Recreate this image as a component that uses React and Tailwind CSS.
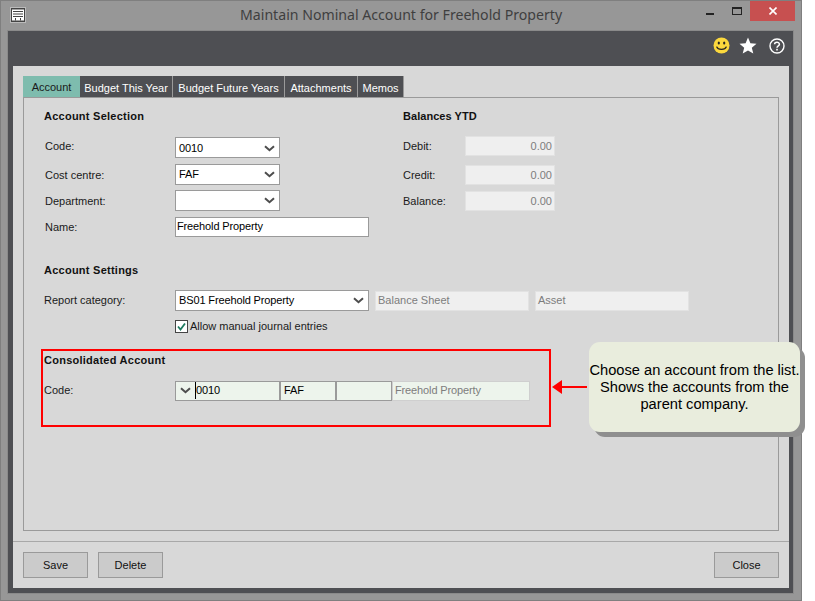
const Chevron = () => (
  <svg width="11" height="7" viewBox="0 0 11 7" className="shrink-0">
    <path d="M1 1.2 L5.5 5.2 L10 1.2" fill="none" stroke="#4d4d4d" strokeWidth="2" />
  </svg>
);

const Select = ({ value, className }) => (
  <div className={"h-[21px] bg-white border border-[#9a9a9a] flex items-center justify-between pl-[3px] pr-[4px] text-[11px] tracking-[-0.13px] text-black " + className}>
    <span>{value}</span>
    <Chevron />
  </div>
);

const Label = ({ children, className = "w-[130px]" }) => (
  <div className={"text-[11px] text-[#1a1a1a] shrink-0 " + className}>{children}</div>
);

const Heading = ({ children, className = "tracking-[0.25px]" }) => (
  <div className={"text-[11px] leading-[14px] font-bold text-[#111] " + className}>{children}</div>
);

const ReadOnly = ({ children, className }) => (
  <div className={"h-[20px] bg-[#efefef] border border-[#e2e2e2] text-[11px] text-[#7d7d7d] flex items-center px-[2px] " + className}>
    {children}
  </div>
);

const Tab = ({ children, active, className }) => (
  <div
    className={
      "h-[21px] flex items-center justify-center text-[11px] " +
      (active ? "bg-[#7ebcae] text-[#1a1a1a] pt-[1px]" : "bg-[#4e4f53] text-white border-r border-[#9a9a9a] pt-[3px]") +
      " " + className
    }
  >
    {children}
  </div>
);

const Btn = ({ children }) => (
  <button className="w-[65px] h-[26px] bg-[#cbcbcb] border border-[#9a9a9a] text-[11px] text-[#111]">{children}</button>
);

export default function App() {
  return (
    <div className="w-[815px] h-[601px] bg-white relative overflow-hidden" style={{ fontFamily: '"Liberation Sans", Arial, sans-serif' }}>
      <div className="w-[802px] h-[601px] bg-[#979797] border border-[#7f7f7f] flex flex-col">
        {/* title bar */}
        <div className="h-[29px] shrink-0 flex items-start relative">
          <svg width="16" height="16" viewBox="0 0 16 16" className="ml-[9px] mt-[6px] shrink-0">
            <rect x="0.5" y="0.5" width="15" height="15" fill="#444" stroke="#bbb" />
            <rect x="2" y="2.5" width="12" height="11" fill="#fff" />
            <rect x="3" y="4" width="10" height="1" fill="#444" />
            <rect x="3" y="6.5" width="10" height="1" fill="#444" />
            <rect x="3" y="9" width="10" height="1" fill="#444" />
            <rect x="5" y="11" width="1" height="2.5" fill="#444" />
            <rect x="10" y="11" width="1" height="2.5" fill="#444" />
          </svg>
          <div className="absolute left-[239px] top-[4px] text-[14.13px] leading-[20px] text-[#3f3f3f] whitespace-nowrap" style={{ fontFamily: '"Noto Sans", sans-serif' }}>
            Maintain Nominal Account for Freehold Property
          </div>
          <div className="ml-auto mr-[6px] flex items-start">
            <div className="w-[8px] h-[2px] bg-[#222] mt-[12px] mr-[18px]" />
            <div className="w-[10px] h-[8px] border border-[#222] border-t-2 mt-[6px] mr-[8px]" />
            <div className="w-[45px] h-[20px] bg-[#c75050] flex items-center justify-center">
              <svg width="8" height="8" viewBox="0 0 8 8">
                <path d="M0.5 0.5 L7.5 7.5 M7.5 0.5 L0.5 7.5" stroke="#fff" strokeWidth="1.6" />
              </svg>
            </div>
          </div>
        </div>

        {/* inner dark frame */}
        <div className="mx-[6px] h-[564px] w-[787px] border border-[#8a8a8a] bg-[#4e4f53] flex flex-col">
          <div className="h-[35px] shrink-0 flex items-center justify-end pr-[8px] pb-[6px] gap-[11px]">
            <svg width="17" height="17" viewBox="0 0 17 17" className="-mr-[2px]">
              <circle cx="8.5" cy="8.5" r="8" fill="#fbd83d" />
              <ellipse cx="5.8" cy="6" rx="1.1" ry="1.6" fill="#222" />
              <ellipse cx="11.2" cy="6" rx="1.1" ry="1.6" fill="#222" />
              <path d="M3.6 9.6 C5 13.4 12 13.4 13.4 9.6" fill="none" stroke="#222" strokeWidth="1.3" />
            </svg>
            <svg width="18" height="17" viewBox="0 0 18 17">
              <path d="M9 0.5 L11.4 6.2 L17.5 6.7 L12.8 10.7 L14.3 16.6 L9 13.4 L3.7 16.6 L5.2 10.7 L0.5 6.7 L6.6 6.2 Z" fill="#fff" />
            </svg>
            <svg width="16" height="16" viewBox="0 0 16 16" className="ml-[1px]">
              <circle cx="8" cy="8" r="7" fill="none" stroke="#fff" strokeWidth="1.4" />
              <path d="M5.6 6.2 C5.6 3.6 10.4 3.6 10.4 6.2 C10.4 7.9 8 7.8 8 9.8" fill="none" stroke="#fff" strokeWidth="1.5" />
              <rect x="7.2" y="10.8" width="1.6" height="1.7" fill="#fff" />
            </svg>
          </div>

          {/* light panel */}
          <div className="mx-[5px] w-[776px] h-[522px] bg-[#d8d8d8] flex flex-col">
            <div className="pt-[10px] pl-[10px] flex">
              <Tab active className="w-[57px]">Account</Tab>
              <Tab className="w-[93px]">Budget This Year</Tab>
              <Tab className="w-[112px]">Budget Future Years</Tab>
              <Tab className="w-[73px]">Attachments</Tab>
              <Tab className="w-[46px]">Memos</Tab>
            </div>

            {/* tab page */}
            <div className="ml-[10px] w-[756px] h-[434px] border border-[#9a9a9a] pl-[20px] pt-[11px] shrink-0">
              <div className="flex">
                <div className="w-[359px] shrink-0">
                  <Heading>Account Selection</Heading>
                  <div className="mt-[14px] flex items-center pl-[1px]">
                    <Label className="w-[130px] pb-[2px]">Code:</Label>
                    <Select value="0010" className="w-[105px] pt-[1px]" />
                  </div>
                  <div className="mt-[6px] flex items-center pl-[1px]">
                    <Label className="w-[130px] pt-[2px]">Cost centre:</Label>
                    <Select value="FAF" className="w-[105px]" />
                  </div>
                  <div className="mt-[5px] flex items-center pl-[1px]">
                    <Label className="w-[130px] pt-[2px]">Department:</Label>
                    <Select value="" className="w-[105px]" />
                  </div>
                  <div className="mt-[6px] flex items-center pl-[1px]">
                    <Label>Name:</Label>
                    <div className="w-[194px] h-[20px] bg-white border border-[#9a9a9a] text-[11px] tracking-[-0.13px] text-black flex items-center px-[1px] pb-[2px]">Freehold Property</div>
                  </div>
                </div>
                <div>
                  <Heading className="tracking-[0.05px]">Balances YTD</Heading>
                  <div className="mt-[13px] flex items-center">
                    <Label className="w-[62px]">Debit:</Label>
                    <ReadOnly className="w-[90px] justify-end">0.00</ReadOnly>
                  </div>
                  <div className="mt-[9px] flex items-center">
                    <Label className="w-[62px]">Credit:</Label>
                    <ReadOnly className="w-[90px] justify-end">0.00</ReadOnly>
                  </div>
                  <div className="mt-[6px] flex items-center">
                    <Label className="w-[62px]">Balance:</Label>
                    <ReadOnly className="w-[90px] justify-end">0.00</ReadOnly>
                  </div>
                </div>
              </div>

              <div className="mt-[26px]">
                <Heading>Account Settings</Heading>
                <div className="mt-[13px] flex items-center">
                  <Label className="w-[131px]">Report category:</Label>
                  <Select value="BS01 Freehold Property" className="w-[194px]" />
                  <ReadOnly className="w-[154px] ml-[6px]">Balance Sheet</ReadOnly>
                  <ReadOnly className="w-[154px] ml-[6px]">Asset</ReadOnly>
                </div>
                <div className="mt-[7px] ml-[131px] flex items-center gap-[2px]">
                  <div className="w-[13px] h-[13px] bg-white border border-[#444] flex items-center justify-center">
                    <svg width="9" height="9" viewBox="0 0 9 9">
                      <path d="M1 4.5 L3.5 7.5 L8 1.5" fill="none" stroke="#1d7a5f" strokeWidth="1.8" />
                    </svg>
                  </div>
                  <span className="text-[11px] text-[#1a1a1a]">Allow manual journal entries</span>
                </div>
              </div>

              <div className="mt-[18px]">
                <Heading>Consolidated Account</Heading>
                <div className="mt-[14px] flex items-center">
                  <Label className="w-[131px]">Code:</Label>
                  <div className="w-[105px] h-[20px] bg-[#edf4ec] border border-[#9a9a9a] flex items-center pl-[4px] text-[11px] tracking-[-0.13px] text-black">
                    <Chevron />
                    <span className="ml-[4px] border-l border-black -mr-[1px]">0010</span>
                  </div>
                  <div className="w-[56px] h-[20px] bg-[#edf4ec] border border-[#9a9a9a] flex items-center px-[3px] text-[11px] tracking-[-0.13px] text-black">FAF</div>
                  <div className="w-[56px] h-[20px] bg-[#edf4ec] border border-[#9a9a9a]" />
                  <div className="w-[138px] h-[20px] bg-[#edf4ec] border border-[#cfcfcf] flex items-center px-[2px] text-[11px] tracking-[-0.13px] text-[#7d7d7d]">Freehold Property</div>
                </div>
              </div>
            </div>

            {/* footer */}
            <div className="mt-[10px] border-t border-[#a8a8a8] flex items-start justify-between pt-[10px] px-[10px]">
              <div className="flex gap-[10px]">
                <Btn>Save</Btn>
                <Btn>Delete</Btn>
              </div>
              <Btn>Close</Btn>
            </div>
          </div>
        </div>
      </div>

      {/* annotations */}
      <div className="absolute left-[41px] top-[349px] w-[510px] h-[78px] border-2 border-[#ff0000]" />
      <svg width="36" height="14" viewBox="0 0 36 14" className="absolute left-[552px] top-[380px]">
        <path d="M0 7 L10 0 L10 14 Z" fill="#ff0000" />
        <rect x="9" y="6" width="26" height="2" fill="#ff0000" />
      </svg>
      <div className="absolute left-[589px] top-[342px] w-[211px] h-[90px] rounded-[11px] bg-[#e9eddd] shadow-[5px_5px_0_#8f8f8f] flex items-center justify-center text-center text-[14.67px] leading-[17px] pt-[1px] text-black">
        <div className="whitespace-nowrap">
          Choose an account from the list.<br />
          Shows the accounts from the<br />
          parent company.
        </div>
      </div>
    </div>
  );
}
